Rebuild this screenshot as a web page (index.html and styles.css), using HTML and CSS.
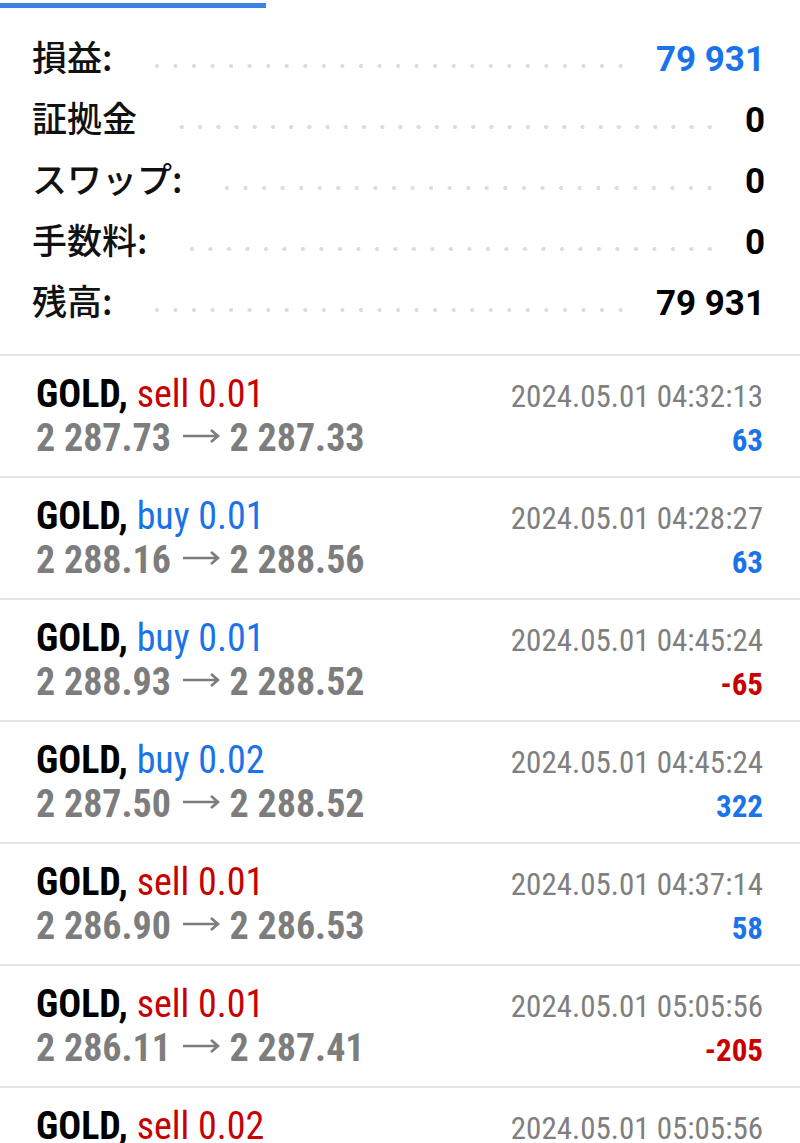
FILE: index.html
```html
<!DOCTYPE html>
<html lang="ja">
<head>
<meta charset="utf-8">
<title>History</title>
<link rel="stylesheet" href="styles.css">
</head>
<body>
<div class="tabbar"><div class="indicator"></div></div>
<section class="summary">
  <div class="srow"><span class="slabel">損益:</span><span class="leader"></span><span class="sval blue">79 931</span></div>
  <div class="srow"><span class="slabel">証拠金</span><span class="leader"></span><span class="sval">0</span></div>
  <div class="srow"><span class="slabel">スワップ:</span><span class="leader"></span><span class="sval">0</span></div>
  <div class="srow"><span class="slabel">手数料:</span><span class="leader"></span><span class="sval">0</span></div>
  <div class="srow"><span class="slabel">残高:</span><span class="leader"></span><span class="sval">79 931</span></div>
</section>
<ul class="deals">
  <li class="deal">
    <div class="dline"><span class="title"><span class="sym">GOLD,</span> <span class="sell">sell 0.01</span></span><span class="time">2024.05.01 04:32:13</span></div>
    <div class="dline"><span class="price">2 287.73 <svg class="arrow" viewBox="0 0 38 14" aria-hidden="true"><path d="M1 7H36M29 1L36 7L29 13"/></svg> 2 287.33</span><span class="profit pos">63</span></div>
  </li>
  <li class="deal">
    <div class="dline"><span class="title"><span class="sym">GOLD,</span> <span class="buy">buy 0.01</span></span><span class="time">2024.05.01 04:28:27</span></div>
    <div class="dline"><span class="price">2 288.16 <svg class="arrow" viewBox="0 0 38 14" aria-hidden="true"><path d="M1 7H36M29 1L36 7L29 13"/></svg> 2 288.56</span><span class="profit pos">63</span></div>
  </li>
  <li class="deal">
    <div class="dline"><span class="title"><span class="sym">GOLD,</span> <span class="buy">buy 0.01</span></span><span class="time">2024.05.01 04:45:24</span></div>
    <div class="dline"><span class="price">2 288.93 <svg class="arrow" viewBox="0 0 38 14" aria-hidden="true"><path d="M1 7H36M29 1L36 7L29 13"/></svg> 2 288.52</span><span class="profit neg">-65</span></div>
  </li>
  <li class="deal">
    <div class="dline"><span class="title"><span class="sym">GOLD,</span> <span class="buy">buy 0.02</span></span><span class="time">2024.05.01 04:45:24</span></div>
    <div class="dline"><span class="price">2 287.50 <svg class="arrow" viewBox="0 0 38 14" aria-hidden="true"><path d="M1 7H36M29 1L36 7L29 13"/></svg> 2 288.52</span><span class="profit pos">322</span></div>
  </li>
  <li class="deal">
    <div class="dline"><span class="title"><span class="sym">GOLD,</span> <span class="sell">sell 0.01</span></span><span class="time">2024.05.01 04:37:14</span></div>
    <div class="dline"><span class="price">2 286.90 <svg class="arrow" viewBox="0 0 38 14" aria-hidden="true"><path d="M1 7H36M29 1L36 7L29 13"/></svg> 2 286.53</span><span class="profit pos">58</span></div>
  </li>
  <li class="deal">
    <div class="dline"><span class="title"><span class="sym">GOLD,</span> <span class="sell">sell 0.01</span></span><span class="time">2024.05.01 05:05:56</span></div>
    <div class="dline"><span class="price">2 286.11 <svg class="arrow" viewBox="0 0 38 14" aria-hidden="true"><path d="M1 7H36M29 1L36 7L29 13"/></svg> 2 287.41</span><span class="profit neg">-205</span></div>
  </li>
  <li class="deal">
    <div class="dline"><span class="title"><span class="sym">GOLD,</span> <span class="sell">sell 0.02</span></span><span class="time">2024.05.01 05:05:56</span></div>
    <div class="dline"><span class="price">2 286.11 <svg class="arrow" viewBox="0 0 38 14" aria-hidden="true"><path d="M1 7H36M29 1L36 7L29 13"/></svg> 2 287.41</span><span class="profit neg">-410</span></div>
  </li>
</ul>
</body>
</html>
```
FILE: styles.css
```css
html, body {
  margin: 0;
  padding: 0;
  background: #ffffff;
  overflow: hidden;
}
body {
  font-family: Roboto, "Noto Sans CJK JP", sans-serif;
  color: #000;
}
.tabbar {
  height: 8px;
  padding-top: 3px;
  box-sizing: border-box;
}
.indicator {
  width: 266px;
  height: 5px;
  background: #3b82e6;
}
.summary {
  padding: 30px 35px 11px 32px;
}
.srow {
  display: flex;
  align-items: baseline;
  height: 61px;
}
.slabel {
  font-family: "Noto Sans CJK JP", sans-serif;
  font-size: 35px;
  font-weight: 500;
  line-height: 1;
  color: #111;
}
.leader {
  flex: 1;
  align-self: flex-start;
  margin: 26px 26px 0 36px;
  height: 4px;
  background-image: radial-gradient(circle, #dcdcdc 1.8px, rgba(220,220,220,0) 2.3px);
  background-size: 18px 4px;
  background-repeat: space no-repeat;
}
.sval {
  font-family: Roboto, sans-serif;
  font-size: 35px;
  font-weight: 700;
  line-height: 1;
  color: #000;
}
.sval.blue { color: #1a73e8; }

.deals {
  list-style: none;
  margin: 0;
  padding: 0;
}
.deal {
  border-top: 2px solid #e6e6e6;
  padding: 16px 37px 16px 36px;
  height: 122px;
  box-sizing: border-box;
}
.dline {
  display: flex;
  justify-content: space-between;
  align-items: baseline;
  height: 44px;
  line-height: 44px;
  white-space: nowrap;
}
.title, .price, .time, .profit {
  font-family: "Roboto Condensed", Roboto, sans-serif;
  font-stretch: 75%;
}
.title { font-size: 38px; }
.sym { font-weight: 700; color: #000; }
.sell { color: #c80000; }
.buy { color: #1a73e8; }
.time {
  font-size: 31px;
  color: #7f7f7f;
}
.price {
  font-size: 38px;
  font-weight: 700;
  color: #7d7d7d;
}
.arrow {
  width: 38px;
  height: 14px;
  margin: 0 1px 0 2px;
  vertical-align: 8px;
  fill: none;
  stroke: #7d7d7d;
  stroke-width: 2.6;
}
.profit {
  font-size: 31px;
  font-weight: 700;
}
.profit.pos { color: #1a73e8; }
.profit.neg { color: #c80000; }
```
